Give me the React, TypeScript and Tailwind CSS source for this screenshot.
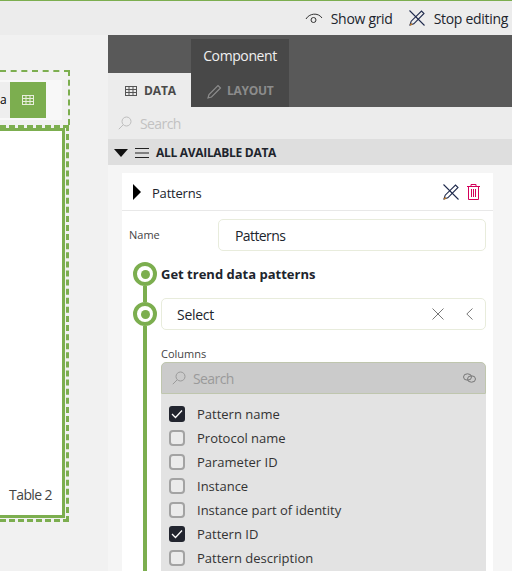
import { useState } from "react"

const columns = [
  { name: "Pattern name", checked: true },
  { name: "Protocol name", checked: false },
  { name: "Parameter ID", checked: false },
  { name: "Instance", checked: false },
  { name: "Instance part of identity", checked: false },
  { name: "Pattern ID", checked: true },
  { name: "Pattern description", checked: false },
]

function EyeIcon() {
  return (
    <svg width="18" height="12" viewBox="0 0 18 12" fill="none" stroke="#333" strokeWidth="1">
      <path d="M1 7 C4 1.5 13 0 17 6" />
      <circle cx="8.5" cy="8" r="2.5" />
    </svg>
  )
}

function DesignIcon({ size = 18 }: { size?: number }) {
  return (
    <svg width={size} height={size} viewBox="0 0 18 18" fill="none" stroke="#1f2a4d" strokeWidth="1.1">
      <path d="M1.5 1.5 L16.5 16.5" />
      <path d="M2 16 L3.2 12.2 L13.5 2 L16 4.5 L5.8 14.8 Z" />
      <path d="M2 16 L4 14.8" stroke="#b5752c" strokeWidth="1.8" />
    </svg>
  )
}

function SearchIcon({ color = "#bdbdbd" }: { color?: string }) {
  return (
    <svg width="14" height="14" viewBox="0 0 14 14" fill="none" stroke={color} strokeWidth="1">
      <circle cx="8.5" cy="5.5" r="4.5" />
      <path d="M5.2 8.8 L0.8 13.2" />
    </svg>
  )
}

function TableIcon({ color, size = 12 }: { color: string; size?: number }) {
  return (
    <svg width={size} height={size} viewBox="0 0 12 12" fill="none" stroke={color} strokeWidth="1">
      <rect x="0.5" y="1.5" width="11" height="9" />
      <path d="M0.5 4.5 H11.5 M0.5 7.5 H11.5 M4 1.5 V10.5 M8 1.5 V10.5" />
    </svg>
  )
}

function Dot() {
  return (
    <div className="w-[24px] h-[24px] shrink-0 rounded-full border-[4px] border-[#7cae4f] bg-white flex items-center justify-center">
      <div className="w-[9px] h-[9px] rounded-full bg-[#7cae4f]" />
    </div>
  )
}

function Check({ checked }: { checked: boolean }) {
  if (checked) {
    return (
      <div className="w-[16px] h-[16px] rounded-[3px] bg-[#22252f] flex items-center justify-center">
        <svg width="12" height="10" viewBox="0 0 12 10" fill="none" stroke="#fff" strokeWidth="1.3">
          <path d="M1 5 L4.5 8.5 L11 1.5" />
        </svg>
      </div>
    )
  }
  return <div className="w-[16px] h-[16px] rounded-[4px] border-2 border-[#a3a3a3] bg-[#ebebeb]" />
}

export default function App() {
  const [name] = useState("Patterns")
  return (
    <div className="w-[512px] h-[571px] overflow-hidden flex flex-col bg-[#f1f1f1] text-[#20242c] font-['Open_Sans','Noto_Sans',sans-serif]">
      <div className="h-[35px] shrink-0 bg-[#ececec] border-t-[1px] border-[#7cae4f] flex items-center justify-end pr-[4px] text-[14px] tracking-[-0.3px]">
        <EyeIcon />
        <span className="ml-[8px] mr-[15px]">Show grid</span>
        <DesignIcon />
        <span className="ml-[8px]">Stop editing</span>
      </div>

      <div className="flex flex-1 min-h-0">
        <div className="w-[108px] shrink-0 pt-[35px] overflow-hidden">
          <div className="w-[70px] h-[55px] border-dashed border-2 border-l-0 border-b-0 border-[#7cae4f] pt-[8px]">
            <div className="w-[62px] h-[40px] bg-[#f8f8f8] flex items-center">
              <div className="w-[10px] h-[36px] bg-[#eeeeee] text-[12px] flex items-center leading-none text-black">a</div>
              <div className="w-[36px] h-[36px] bg-[#7cae4f] flex items-center justify-center">
                <TableIcon color="#e8eedc" />
              </div>
            </div>
          </div>
          <div className="w-[69px] h-[397px] border-dashed border-[3px] border-l-0 border-[#7cae4f] pr-[1px]">
            <div className="h-[390px] bg-white border-[3px] border-l-0 border-[#7cae4f] flex items-end justify-end pb-[10px] pr-[10px] text-[14px] tracking-[-0.6px] text-[#444]">
              Table 2
            </div>
          </div>
        </div>

        <div className="flex-1 min-w-0 flex flex-col bg-[#f5f5f5]">
          <div className="h-[72px] shrink-0 bg-[#595959] flex items-end">
            <div className="w-[83px] h-[34px] bg-[#ececec] flex items-center pl-[17px] pt-[2px] text-[12px] font-bold tracking-[-0.1px] text-[#4a4a4a]">
              <TableIcon color="#555" />
              <span className="ml-[7px]">DATA</span>
            </div>
            <div className="w-[98px] h-[68px] bg-[#484848] flex flex-col">
              <div className="h-[34px] pb-[2px] flex items-center justify-center text-[14px] tracking-[-0.4px] text-[#f0f0f0]">Component</div>
              <div className="h-[34px] pt-[2px] flex items-center pl-[16px] text-[12px] font-bold tracking-[-0.3px] text-[#8c8c8c]">
                <svg width="15" height="15" viewBox="0 0 15 15" fill="none" stroke="#8c8c8c" strokeWidth="1.2">
                  <path d="M1 14 L2 10.5 L11 1.5 L13.5 4 L4.5 13 Z" />
                </svg>
                <span className="ml-[5px]">LAYOUT</span>
              </div>
            </div>
          </div>

          <div className="h-[32px] shrink-0 bg-[#ececec] flex items-center pl-[10px] text-[14px] tracking-[-0.6px] text-[#c2c2c2]">
            <SearchIcon />
            <span className="ml-[8px]">Search</span>
          </div>

          <div className="h-[26px] shrink-0 bg-[#dedede] flex items-center pl-[6px] pt-[2px] text-[12px] font-bold tracking-[-0.3px] text-[#20242c]">
            <svg width="14" height="8" viewBox="0 0 14 8" fill="#111">
              <path d="M0 0 H14 L7 8 Z" />
            </svg>
            <svg className="ml-[7px]" width="14" height="10" viewBox="0 0 14 10" fill="none" stroke="#222" strokeWidth="1">
              <path d="M0 .5 H14 M0 5 H14 M0 9.5 H14" />
            </svg>
            <span className="ml-[7px]">ALL AVAILABLE DATA</span>
          </div>

          <div className="ml-[14px] mr-[19px] mt-[8px] flex-1 min-h-0 bg-white flex flex-col overflow-hidden">
            <div className="h-[38px] shrink-0 border-b border-[#e8e8e8] flex items-center pl-[11px] pr-[13px] text-[13px] tracking-[-0.2px]">
              <svg width="8" height="16" viewBox="0 0 8 16" fill="#000">
                <path d="M0 0 L8 8 L0 16 Z" />
              </svg>
              <span className="ml-[11px] flex-1 pt-[4px]">Patterns</span>
              <DesignIcon />
              <svg className="ml-[7px]" width="13" height="16" viewBox="0 0 13 16" fill="none" stroke="#d4005a" strokeWidth="1">
                <path d="M0 2.5 H13 M4 2.5 V.5 H9 V2.5 M1.5 2.5 V15.5 H11.5 V2.5 M4.5 5 V13 M6.5 5 V13 M8.5 5 V13" />
              </svg>
            </div>

            <div className="flex items-center mt-[8px] shrink-0">
              <span className="w-[96px] pl-[7px] text-[11px] text-[#444]">Name</span>
              <div className="w-[268px] h-[32px] rounded-[5px] border border-[#e8ecdc] flex items-center pl-[16px] text-[14px] tracking-[-0.6px]">
                {name}
              </div>
            </div>

            <div className="flex flex-1 min-h-0 pt-[11px] pl-[11px]">
              <div className="w-[24px] shrink-0 flex flex-col items-center">
                <Dot />
                <div className="w-[4px] h-[16px] bg-[#7cae4f]" />
                <Dot />
                <div className="w-[4px] flex-1 bg-[#7cae4f]" />
              </div>

              <div className="ml-[4px] w-[325px]">
                <div className="h-[24px] pt-[2px] flex items-center text-[13px] font-bold">Get trend data patterns</div>
                <div className="mt-[12px] h-[32px] rounded-[5px] border border-[#e8ecdc] flex items-center pl-[15px] pr-[12px] text-[14px] tracking-[-0.3px]">
                  <span className="flex-1">Select</span>
                  <svg width="12" height="12" viewBox="0 0 12 12" fill="none" stroke="#777" strokeWidth="1">
                    <path d="M.5 .5 L11.5 11.5 M11.5 .5 L.5 11.5" />
                  </svg>
                  <svg className="ml-[22px]" width="7" height="12" viewBox="0 0 7 12" fill="none" stroke="#777" strokeWidth="1">
                    <path d="M6.5 .5 L.8 6 L6.5 11.5" />
                  </svg>
                </div>
                <div className="mt-[16px] h-[16px] flex items-center text-[11px] text-[#444]">Columns</div>
                <div className="h-[32px] rounded-t-[5px] bg-[#cbcbcb] border border-[#bfc6ae] flex items-center pl-[10px] pr-[9px] text-[14px] tracking-[-0.6px] text-[#9a9a9a]">
                  <SearchIcon color="#9a9a9a" />
                  <span className="ml-[7px] flex-1">Search</span>
                  <svg width="13" height="10" viewBox="0 0 13 10" fill="none" stroke="#777" strokeWidth="1">
                    <ellipse cx="4.5" cy="4" rx="4" ry="3.2" />
                    <ellipse cx="8.5" cy="6" rx="4" ry="3.2" />
                  </svg>
                </div>
                <div className="bg-[#e3e3e3] pt-[8px] pl-[8px] pb-[20px] flex flex-col">
                  {columns.map((c) => (
                    <div key={c.name} className="h-[24px] flex items-center text-[13px] text-[#333]">
                      <Check checked={c.checked} />
                      <span className="ml-[12px] pt-[2px]">{c.name}</span>
                    </div>
                  ))}
                </div>
              </div>
            </div>
          </div>
        </div>
      </div>
    </div>
  )
}
